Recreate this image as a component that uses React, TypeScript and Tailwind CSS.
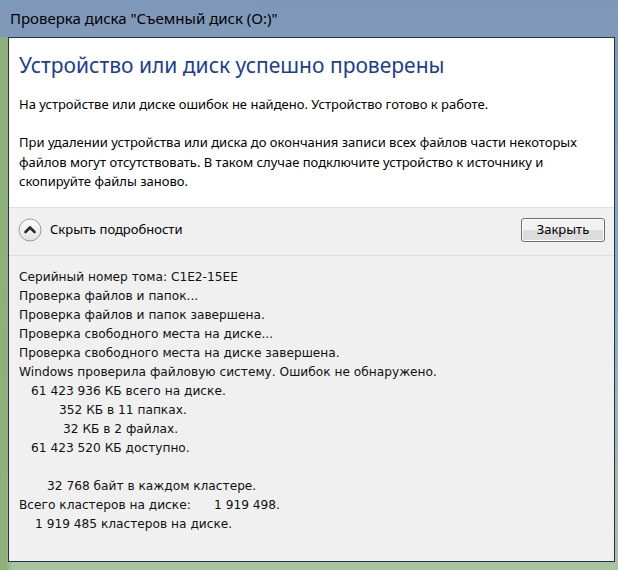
import React from 'react';

const details: { text: string; pad: number }[] = [
  { text: 'Серийный номер тома: C1E2-15EE', pad: 0 },
  { text: 'Проверка файлов и папок...', pad: 0 },
  { text: 'Проверка файлов и папок завершена.', pad: 0 },
  { text: 'Проверка свободного места на диске...', pad: 0 },
  { text: 'Проверка свободного места на диске завершена.', pad: 0 },
  { text: 'Windows проверила файловую систему. Ошибок не обнаружено.', pad: 0 },
  { text: '61 423 936 КБ всего на диске.', pad: 12 },
  { text: '352 КБ в 11 папках.', pad: 40 },
  { text: '32 КБ в 2 файлах.', pad: 44 },
  { text: '61 423 520 КБ доступно.', pad: 12 },
  { text: '', pad: 0 },
  { text: '32 768 байт в каждом кластере.', pad: 28 },
];

const ChevronButton = () => (
  <svg width="24" height="24" viewBox="0 0 24 24">
    <defs>
      <linearGradient id="ring" x1="0" y1="0" x2="0" y2="1">
        <stop offset="0" stopColor="#ffffff" />
        <stop offset="1" stopColor="#e2e2e2" />
      </linearGradient>
    </defs>
    <circle cx="12" cy="12" r="11" fill="url(#ring)" stroke="#9a9a9a" strokeWidth="1" />
    <path d="M7.5 14 L12 9.5 L16.5 14" fill="none" stroke="#2a2a2a" strokeWidth="2.6" strokeLinecap="round" strokeLinejoin="round" />
  </svg>
);

export default function App() {
  const ui = { fontFamily: '"Noto Sans", "Open Sans", sans-serif' };
  const mono = { fontFamily: '"DejaVu Sans", Verdana, sans-serif' };

  return (
    <div className="w-[618px] h-[570px] overflow-hidden flex flex-col bg-gradient-to-b from-[#7f97b8] via-[#8fa7c2] to-[#a9c3a4]">
      {/* title bar */}
      <div className="h-[37px] flex items-center pl-[10px] text-[15px] text-black" style={ui}>
        Проверка диска "Съемный диск (O:)"
      </div>

      <div className="flex-1 flex pl-[8px] pr-[3px] pb-[8px] bg-gradient-to-r from-[#8fb07a] from-[1%] via-transparent via-[2%] to-transparent">
        <div className="flex-1 flex flex-col border border-[#243447] bg-[#f0f0f0]">
          {/* main instruction */}
          <div className="bg-white h-[169px] pl-[10px] pr-[10px] pt-[13px] text-black" style={ui}>
            <div className="text-[21px] leading-[28px] text-[#1b3d98]">Устройство или диск успешно проверены</div>
            <div className="mt-[15px] text-[13px] leading-[20px]">
              На устройстве или диске ошибок не найдено. Устройство готово к работе.
            </div>
            <div className="mt-[19px] text-[13px] leading-[19.5px] w-[572px]">
              При удалении устройства или диска до окончания записи всех файлов части некоторых файлов могут
              отсутствовать. В таком случае подключите устройство к источнику и скопируйте файлы заново.
            </div>
          </div>

          {/* command area */}
          <div className="h-[49px] flex items-center justify-between pl-[9px] pr-[9px] pb-[4px] border-t border-b border-[#dfdfdf]" style={ui}>
            <div className="flex items-center gap-[8px]">
              <ChevronButton />
              <span className="text-[13px] text-black">Скрыть подробности</span>
            </div>
            <button className="w-[84px] h-[24px] rounded-[3px] border border-[#707070] bg-gradient-to-b from-[#f2f2f2] from-50% to-[#dcdcdc] to-50% text-[13px] text-black shadow-[inset_0_0_0_1px_#fcfcfc]">
              Закрыть
            </button>
          </div>

          {/* details */}
          <div className="pl-[10px] pt-[12px] text-[12.2px] leading-[19px] text-[#111]" style={mono}>
            {details.map((d, i) => (
              <div key={i} className="h-[19px] whitespace-pre" style={{ paddingLeft: d.pad }}>
                {d.text}
              </div>
            ))}
            <div className="h-[19px] flex whitespace-pre">
              <span className="w-[195px]">Всего кластеров на диске:</span>
              <span>1 919 498.</span>
            </div>
            <div className="h-[19px] whitespace-pre pl-[16px]">1 919 485 кластеров на диске.</div>
          </div>
        </div>
      </div>
    </div>
  );
}
